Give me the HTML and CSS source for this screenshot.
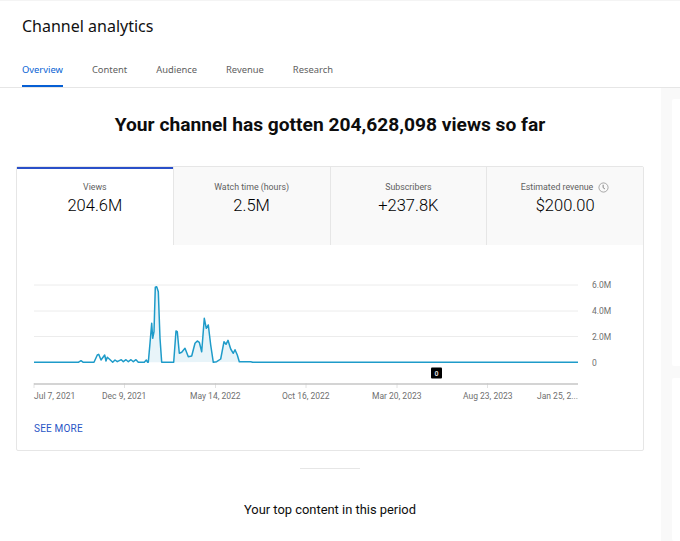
FILE: index.html
```html
<!doctype html>
<html>
<head>
<title>Channel analytics</title>
<link rel="stylesheet" href="styles.css">
</head>
<body>
<header class="top">
	<h1>Channel analytics</h1>
	<nav class="tabs">
		<a class="active">Overview</a>
		<a>Content</a>
		<a>Audience</a>
		<a>Revenue</a>
		<a>Research</a>
	</nav>
</header>
<div class="page">
	<main class="main">
		<h2 class="headline">Your channel has gotten 204,628,098 views so far</h2>
		<section class="card">
			<div class="metrics">
				<div class="metric selected">
					<div class="metric-label">Views</div>
					<div class="metric-value">204.6M</div>
				</div>
				<div class="metric">
					<div class="metric-label">Watch time (hours)</div>
					<div class="metric-value">2.5M</div>
				</div>
				<div class="metric">
					<div class="metric-label">Subscribers</div>
					<div class="metric-value">+237.8K</div>
				</div>
				<div class="metric">
					<div class="metric-label">Estimated revenue
						<svg class="clock" viewBox="0 0 12 12" width="11" height="11"><circle cx="6" cy="6" r="5" fill="none" stroke="#8a8a8a" stroke-width="0.8"/><path d="M5.6 3v3.2l1.9 1.4" fill="none" stroke="#777" stroke-width="1"/></svg>
					</div>
					<div class="metric-value">$200.00</div>
				</div>
			</div>
			<svg class="chart" viewBox="17 245 626 160" width="626" height="160">
				<g class="grid">
					<line x1="34" y1="285" x2="578" y2="285"/>
					<line x1="34" y1="311" x2="578" y2="311"/>
					<line x1="34" y1="336.500" x2="578" y2="336.500"/>
				</g>
				<g class="axis-ticks">
					<line x1="34" y1="383" x2="34" y2="388"/>
					<line x1="124.500" y1="383" x2="124.500" y2="388"/>
					<line x1="215.500" y1="383" x2="215.500" y2="388"/>
					<line x1="306" y1="383" x2="306" y2="388"/>
					<line x1="397" y1="383" x2="397" y2="388"/>
					<line x1="487.500" y1="383" x2="487.500" y2="388"/>
				</g>
				<line class="axis" x1="34" y1="384" x2="578" y2="384"/>
				<path class="area" d="M148.300 362.300 L150 343.300 L151.700 323.300 L152.700 338.300 L154 331.700 L155.300 287.300 L156.700 286.700 L158.300 291.700 L160 338.300 L161.700 362.300 Z M173.700 362.300 L176 331 L177.300 331.700 L179.300 353.300 L181.700 352.300 L185 348.300 L188.300 356.700 L191.700 356 L195 343.300 L197.300 341 L199.300 342.300 L201.700 351.700 L204.300 318.300 L206.300 328.300 L208.300 325 L210.700 345 L213.300 362.300 L216.700 361.700 L220.700 359 L224 341.700 L226 344.300 L228 340.300 L230.700 349 L233.300 353.300 L235 349.700 L237.300 355 L239.300 361.700 Z"/>
				<polyline class="line" points="34,362.300 78.300,362.300 81,360.700 83.300,362.300 94,362.300 97.300,355 98.700,354.300 101,360 104.700,355 106,361 107.300,357.300 109.300,359 112.700,362.300 115,360 117.300,361.700 121.300,359.700 123.300,361.700 126,359.700 128.300,361.700 131,359.700 133.300,361.700 136,359.700 138.300,362.300 144.300,362.300 146.300,360 147.700,362.300 148.300,362.300 150,343.300 151.700,323.300 152.700,338.300 154,331.700 155.300,287.300 156.700,286.700 158.300,291.700 160,338.300 161.700,362.300 173.700,362.300 176,331 177.300,331.700 179.300,353.300 181.700,352.300 185,348.300 188.300,356.700 191.700,356 195,343.300 197.300,341 199.300,342.300 201.700,351.700 204.300,318.300 206.300,328.300 208.300,325 210.700,345 213.300,362.300 216.700,361.700 220.700,359 224,341.700 226,344.300 228,340.300 230.700,349 233.300,353.300 235,349.700 237.300,355 239.300,361.700 250.700,361.700 252.700,362.300 578,362.300"/>
				<g class="y-labels">
					<text x="592" y="288">6.0M</text>
					<text x="592" y="314">4.0M</text>
					<text x="592" y="340">2.0M</text>
					<text x="592" y="366">0</text>
				</g>
				<g class="x-labels">
					<text x="34" y="399">Jul 7, 2021</text>
					<text x="102" y="399">Dec 9, 2021</text>
					<text x="190" y="399">May 14, 2022</text>
					<text x="282" y="399">Oct 16, 2022</text>
					<text x="372" y="399">Mar 20, 2023</text>
					<text x="463" y="399">Aug 23, 2023</text>
					<text x="537" y="399">Jan 25, 2...</text>
				</g>
				<rect class="marker" x="431" y="367.500" width="11" height="11" rx="1"/>
				<text class="marker-glyph" x="436.500" y="375.500">0</text>
			</svg>
			<a class="see-more">SEE MORE</a>
		</section>
		<div class="divider"></div>
		<h3 class="subhead">Your top content in this period</h3>
	</main>
	<aside class="side">
		<div class="side-card first"></div>
		<div class="side-card"></div>
	</aside>
</div>
</body>
</html>
```

FILE: styles.css
```css
html, body {
  margin: 0;
  height: 541px;
  overflow: hidden;
  background: #fff;
  font-family: "Roboto", "Liberation Sans", sans-serif;
  color: #0d0d0d;
}

.top {
  height: 86px;
  border-top: 1px solid #f4f4f4;
  border-bottom: 1px solid #e6e6e6;
}
.top h1 {
  margin: 0;
  padding: 15px 0 0 22px;
  font-family: "Noto Sans", sans-serif;
  font-size: 16px;
  font-weight: 400;
  line-height: 20px;
  color: #111;
}
.tabs {
  display: flex;
  gap: 29px;
  padding: 27px 0 0 22px;
}
.tabs a {
  font-family: "Noto Sans", sans-serif;
  font-size: 9.400px;
  line-height: 14px;
  height: 22px;
  color: #606060;
  border-bottom: 2px solid transparent;
}
.tabs a.active {
  color: #065fd4;
  border-bottom-color: #065fd4;
}

.page {
  display: flex;
  height: 453px;
}
.main {
  width: 661px;
  flex: none;
  box-sizing: border-box;
  padding: 0 17px 0 16px;
}
.side {
  flex: 1;
  background: #f9f9f9;
  padding: 11px 0 0 11px;
  display: flex;
  flex-direction: column;
  gap: 12px;
}
.side-card {
  flex: 1;
  background: #fff;
  border-radius: 2px 0 0 2px;
}
.side-card.first {
  flex: none;
  height: 267px;
}

.headline {
  margin: 0;
  padding-top: 24px;
  height: 55px;
  box-sizing: border-box;
  text-align: center;
  font-size: 19.200px;
  font-weight: 700;
  line-height: 25px;
  color: #0d0d0d;
}
.card {
  border: 1px solid #e6e6e6;
  border-radius: 2px;
  height: 285px;
  box-sizing: border-box;
  margin-top: 23px;
}
.metrics {
  display: flex;
  height: 78px;
  background: #f9f9f9;
}
.metric {
  flex: 1;
  text-align: center;
  padding-top: 14px;
  border-left: 1px solid #e6e6e6;
  box-sizing: border-box;
}
.metric.selected {
  background: #fff;
  border-left: none;
  border-right: 1px solid #e6e6e6;
  margin-right: -1px;
  box-shadow: inset 0 2px 0 #2a4fc9;
}
.metric-label {
  font-size: 8.800px;
  line-height: 12px;
  color: #606060;
}
.metric-value {
  font-size: 16.500px;
  font-weight: 300;
  line-height: 20px;
  margin-top: 3px;
  color: #000;
}
.clock {
  vertical-align: -3px;
  margin-left: 3px;
}

.chart {
  display: block;
}
.grid line {
  stroke: #ececec;
  stroke-width: 1;
}
.axis {
  stroke: #c6c6c6;
  stroke-width: 1.500;
}
.axis-ticks line {
  stroke: #e2e2e2;
}
.area {
  fill: #e8f4f9;
}
.line {
  fill: none;
  stroke: #1e9bc9;
  stroke-width: 1.500;
  stroke-linejoin: round;
}
.y-labels text,
.x-labels text {
  font-family: "Roboto", sans-serif;
  font-size: 8.500px;
  fill: #6f6f6f;
}
.marker {
  fill: #000;
}
.marker-glyph {
  font-size: 7px;
  font-weight: 700;
  text-anchor: middle;
  fill: #ddd;
}

.see-more {
  display: block;
  margin: 17px 0 0 17px;
  font-size: 10px;
  font-weight: 400;
  line-height: 13px;
  letter-spacing: 0.200px;
  color: #2a56c6;
}

.divider {
  width: 60px;
  height: 1px;
  background: #e6e6e6;
  margin: 17px auto 0;
}
.subhead {
  margin: 32px 0 0;
  text-align: center;
  font-size: 12.900px;
  font-weight: 400;
  line-height: 18px;
  color: #0d0d0d;
}
```
